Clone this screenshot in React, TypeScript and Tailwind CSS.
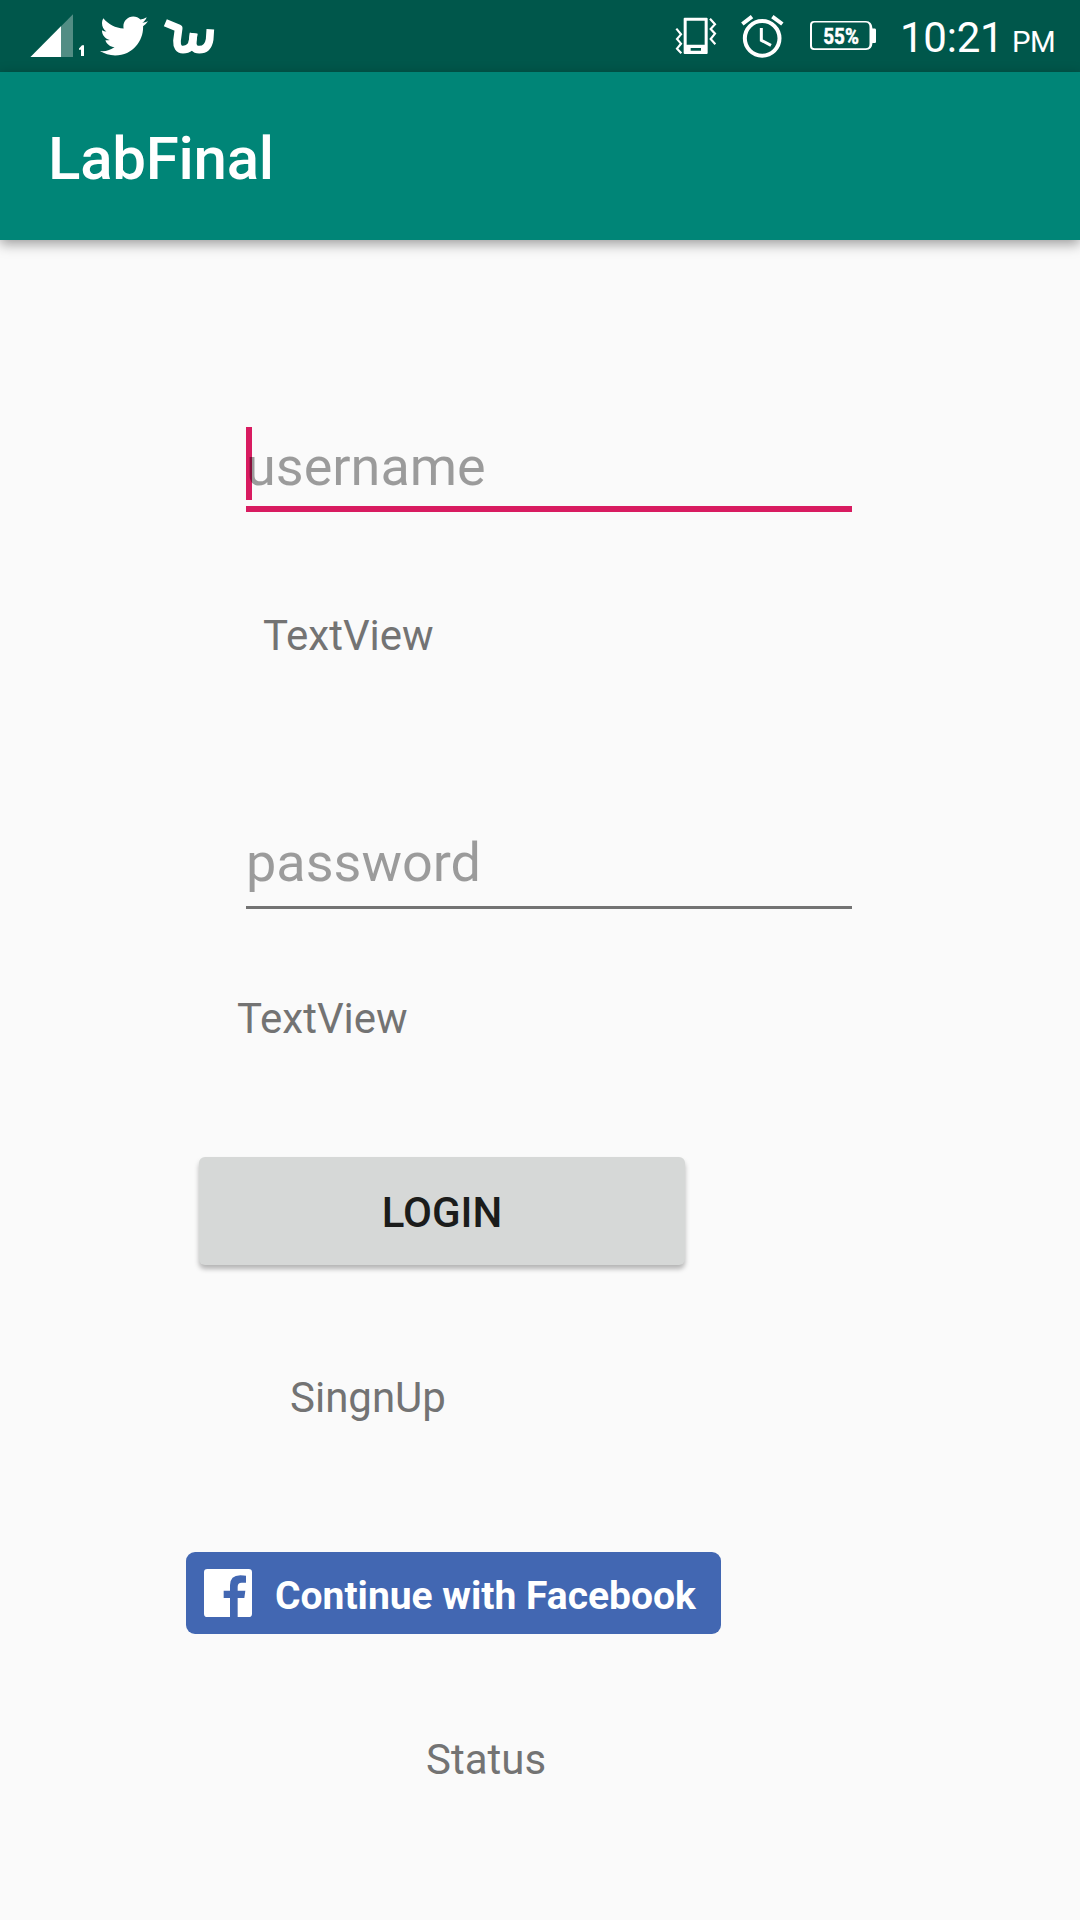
import React from "react";
import { FaTwitter } from "react-icons/fa";

function SignalIcon() {
  return (
    <svg className="ml-[30px] h-[72px] w-[55px] shrink-0" viewBox="30 0 55 72">
      <path d="M30.5 57L73 14.3V57Z" fill="#fff" fillOpacity="0.32" />
      <path d="M30.5 57L61 26.3V57Z" fill="#fff" />
      <path d="M79 48.6L82 45.2H84V56H81V49.8H79Z" fill="#fff" />
    </svg>
  );
}

function WishIcon() {
  return (
    <svg
      className="ml-[15px] h-[72px] w-[52px] shrink-0"
      viewBox="489 0 156 216"
      fill="none"
      stroke="#fff"
      strokeWidth="23"
      strokeLinejoin="round"
    >
      <path d="M496 68L536 85L531 122Q530 149 549 149Q574 149 578 122L581 100" />
      <path d="M581 100L578 124Q577 149 598 149Q624 149 629 118L631 88" />
    </svg>
  );
}

function VibrateIcon() {
  return (
    <svg className="h-[72px] w-[42px] shrink-0" viewBox="76 0 126 216" fill="none" stroke="#fff">
      <path
        d="M105 53H171Q174 53 174 56V159Q174 162 171 162H105Q102 162 102 159V56Q102 53 105 53ZM111 62V134H165V62ZM123 144V152H154V144Z"
        fill="#fff"
        fillRule="evenodd"
        stroke="none"
      />
      <path
        d="M80 86L94 103L82 117L94 131L82 146L95 160M181 56L196 73L183 87L196 101L183 117L197 133"
        strokeWidth="6.5"
      />
    </svg>
  );
}

function AlarmIcon() {
  return (
    <svg className="ml-[23px] h-[72px] w-[44px] shrink-0" viewBox="271 0 132 216" fill="none" stroke="#fff">
      <circle cx="337.5" cy="115" r="52" strokeWidth="12" />
      <path d="M278 72L307 50M368 50L398 72" strokeWidth="12" />
      <path d="M335 84V121L364 136" strokeWidth="9" />
    </svg>
  );
}

function BatteryIcon() {
  return (
    <svg className="ml-[25px] h-[72px] w-[68px] shrink-0" viewBox="159 0 68 72">
      <path
        d="M164 21H216Q222 21 222.5 28.5H225Q226 28.5 226 30V41.5Q226 43 225 43H222.500Q222 50 216 50H164Q160 50 160 46V25Q160 21 164 21ZM164.500 22.500Q162 22.500 162 25V46Q162 48.300 164.500 48.300H215.500Q219.500 48.300 219.500 44V27Q219.500 22.500 215.500 22.500Z"
        fill="#fff"
        fillRule="evenodd"
      />
      <text
        x="173.300"
        y="43.700"
        fill="#fff"
        stroke="#fff"
        strokeWidth="0.5"
        fontSize="21.500"
        fontWeight="700"
        fontFamily="Roboto, sans-serif"
        textLength="35.500"
        lengthAdjust="spacingAndGlyphs"
      >
        55%
      </text>
    </svg>
  );
}

function FacebookIcon() {
  return (
    <svg className="h-[48px] w-[48px] shrink-0" viewBox="0 0 144 144">
      <path
        d="M10 0H134Q144 0 144 10V134Q144 144 134 144H101V87H121L124 65H101V53Q101 41 113 41H126V20Q120 18.500 109 18.500Q78 18.500 78 49V65H59V87H78V144H10Q0 144 0 134V10Q0 0 10 0Z"
        fill="#fff"
      />
    </svg>
  );
}

function StatusBar() {
  return (
    <div className="flex h-[72px] items-center justify-between bg-[#00574b] text-white">
      <div className="flex items-center">
        <SignalIcon />
        <FaTwitter className="ml-[15px] h-[48px] w-[48px] shrink-0" />
        <WishIcon />
      </div>
      <div className="flex items-center pr-[25px]">
        <VibrateIcon />
        <AlarmIcon />
        <BatteryIcon />
        <div className="ml-[23px] flex items-baseline pt-[8px] leading-[49px]">
          <span className="text-[42px] tracking-[-0.2px]">10:21</span>
          <span className="ml-[8.5px] text-[29.4px] tracking-[-0.6px]">PM</span>
        </div>
      </div>
    </div>
  );
}

export default function App() {
  return (
    <div className="flex h-[1920px] w-[1080px] flex-col bg-[#fafafa] font-[Roboto,sans-serif] text-[42px] leading-[49px] text-[#737373]">
      <StatusBar />
      <header className="flex h-[168px] items-center bg-[#008577] pt-[6px] pl-[48px] shadow-[0_4px_12px_rgba(0,0,0,0.38)]">
        <h1 className="text-[60px] leading-[70px] font-medium tracking-[-0.25px] text-white">LabFinal</h1>
      </header>
      <main className="flex flex-col items-start">
        <div className="relative mt-[187px] ml-[246px] flex h-[85px] w-[606px] flex-col border-b-[6px] border-[#d81b60] pt-[8px] text-[54px] leading-[63px]">
          <span className="absolute top-0 left-0 h-[73px] w-[6px] bg-[#d81b60]" />
          <span className="relative text-black/[0.38]">username</span>
        </div>
        <p className="mt-[99px] ml-[263px]">TextView</p>
        <div className="mt-[171px] ml-[246px] h-[78px] w-[606px] border-b-[3px] border-[#737373] text-[54px] leading-[63px] text-black/[0.38]">
          password
        </div>
        <p className="mt-[85px] ml-[237px]">TextView</p>
        <button className="mt-[114px] ml-[199px] flex h-[108px] w-[486px] items-center justify-center rounded-[6px] bg-[#d6d8d7] pt-[2px] font-medium text-[#1b1c1b] shadow-[0_4px_5px_rgba(0,0,0,0.28)]">
          LOGIN
        </button>
        <p className="mt-[108px] ml-[290px]">SingnUp</p>
        <button className="mt-[130px] ml-[186px] flex h-[82px] w-[535px] items-center rounded-[9px] bg-[#4267b2] pl-[18px] text-[39px] leading-[46px] font-bold text-white">
          <FacebookIcon />
          <span className="ml-[23px] pt-[6px]">Continue with Facebook</span>
        </button>
        <p className="mt-[101px] ml-[426px]">Status</p>
      </main>
    </div>
  );
}
